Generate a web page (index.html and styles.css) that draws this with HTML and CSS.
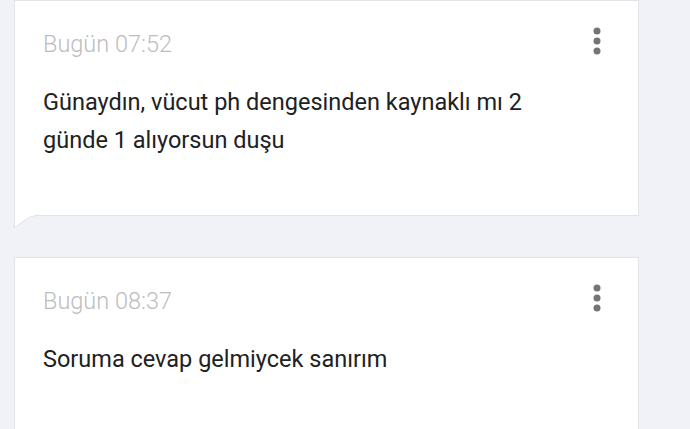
FILE: index.html
```html
<!DOCTYPE html>
<html lang="tr">
<head>
    <meta charset="UTF-8">
    <meta name="viewport" content="width=device-width, initial-scale=1.0">
    <title>Mesajlar</title>
    <link rel="stylesheet" href="styles.css">
</head>
<body>
    <div class="thread">

        <div class="message has-tail">
            <div class="message-head">
                <span class="time">Bugün 07:52</span>
                <button class="more" aria-label="Seçenekler">
                    <svg width="8" height="28" viewBox="0 0 8 28">
                        <circle cx="4" cy="4" r="3.5"/>
                        <circle cx="4" cy="14" r="3.5"/>
                        <circle cx="4" cy="24" r="3.5"/>
                    </svg>
                </button>
            </div>
            <p class="text">Günaydın, vücut ph dengesinden kaynaklı mı 2 günde 1 alıyorsun duşu</p>
            <svg class="tail" width="20" height="14" viewBox="0 0 20 14">
                <path d="M0 0 H20 V2 H0 Z" fill="#fff"/>
                <path d="M0.5 0 V12.5 L15 2.5 Q16.5 1.5 18.5 1.5 H20" fill="#fff" stroke="#e2e3e9" stroke-width="1"/>
            </svg>
        </div>

        <div class="message">
            <div class="message-head">
                <span class="time">Bugün 08:37</span>
                <button class="more" aria-label="Seçenekler">
                    <svg width="8" height="28" viewBox="0 0 8 28">
                        <circle cx="4" cy="4" r="3.5"/>
                        <circle cx="4" cy="14" r="3.5"/>
                        <circle cx="4" cy="24" r="3.5"/>
                    </svg>
                </button>
            </div>
            <p class="text">Soruma cevap gelmiycek sanırım</p>
        </div>

    </div>
</body>
</html>
```

FILE: styles.css
```css
body {
    margin: 0;
    background-color: #f1f2f7;
    font-family: Roboto, "Noto Sans", Arial, sans-serif;
}

.thread {
    display: flex;
    flex-direction: column;
    gap: 41px;
    width: 625px;
    margin-left: 14px;
}

.message {
    position: relative;
    background-color: #fff;
    border: 1px solid #e2e3e9;
    padding: 28px 37px 56px 28px;
}

.message-head {
    display: flex;
    justify-content: space-between;
    align-items: flex-start;
}

.time {
    font-size: 23.5px;
    font-weight: 300;
    line-height: 30px;
    color: #bdbdbd;
}

.more {
    margin: -2px 0 0;
    padding: 0;
    border: none;
    background: none;
    cursor: pointer;
    display: flex;
}

.more svg {
    fill: #757575;
}

.text {
    margin: 24px 0 0;
    font-size: 23.5px;
    line-height: 38px;
    color: #212121;
    max-width: 510px;
}

/* speech bubble tail under the first card */
.tail {
    position: absolute;
    left: -1px;
    top: 100%;
    display: block;
}
```
